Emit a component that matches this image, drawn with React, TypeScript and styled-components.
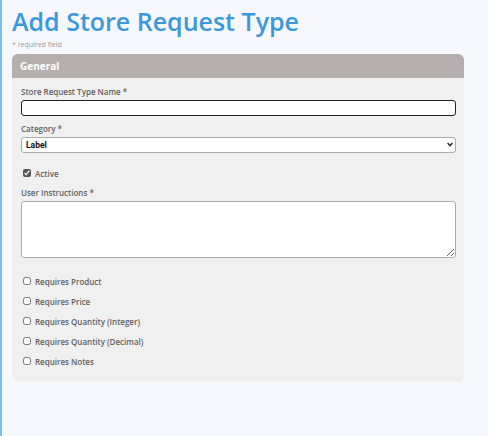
import styled, { createGlobalStyle } from 'styled-components';

const GlobalStyle = createGlobalStyle`
	html, body {
		margin: 0;
		padding: 0;
		background: #f7f8fd;
	}
	body {
		font-family: 'Open Sans', 'DejaVu Sans', sans-serif;
	}
`;

const Page = styled.div`
	min-height: 436px;
	box-sizing: border-box;
	border-left: 2px solid #7cbcee;
	padding: 6px 0 0 10px;
	width: 488px;
`;

const Title = styled.h1`
	margin: 0;
	font-size: 25px;
	font-weight: 600;
	color: #3a98de;
	line-height: 30px;
`;

const Required = styled.div`
	font-size: 7px;
	color: #9a9a9a;
	margin: 4px 0 5px;
`;

const Card = styled.section`
	width: 452px;
	background: #f0f0f0;
	border-radius: 6px;
	overflow: hidden;
	padding-bottom: 15px;
`;

const CardHeader = styled.div`
	background: #b6afaf;
	color: #fff;
	font-weight: 700;
	font-size: 10px;
	height: 24px;
	line-height: 24px;
	padding-left: 8px;
`;

const CardBody = styled.div`
	padding: 9px 8px 0 9px;
	display: flex;
	flex-direction: column;
`;

const Label = styled.label`
	display: block;
	font-size: 8px;
	line-height: 10px;
	font-weight: 600;
	color: #606060;
	margin-bottom: 3px;
`;

const Field = styled.div<{ $gap?: number }>`
	margin-top: ${(p) => p.$gap ?? 0}px;
`;

const TextInput = styled.input<{ $focused?: boolean }>`
	box-sizing: border-box;
	display: block;
	width: 435px;
	height: 16px;
	border: ${(p) => (p.$focused ? '1.5px solid #222' : '1px solid #aaa')};
	border-radius: 3px;
	background: #fff;
	outline: none;
`;

const SelectWrap = styled.div`
	position: relative;
	width: 435px;
`;

const Select = styled.select`
	box-sizing: border-box;
	display: block;
	width: 435px;
	height: 16px;
	border: 1px solid #aaa;
	border-radius: 3px;
	background: #fff;
	font-family: Roboto, 'Liberation Sans', sans-serif;
	font-size: 8.5px;
	font-weight: 700;
	color: #111;
	padding: 0 4px;
	appearance: none;
`;

const Chevron = styled.svg`
	position: absolute;
	right: 3px;
	top: 5px;
	width: 6px;
	height: 5px;
	pointer-events: none;
`;

const TextArea = styled.textarea`
	box-sizing: border-box;
	display: block;
	width: 435px;
	height: 57px;
	border: 1px solid #aaa;
	border-radius: 3px;
	background: #fff;
	resize: vertical;
`;

const CheckRow = styled.label<{ $gap?: number }>`
	display: flex;
	align-items: center;
	gap: 4px;
	height: 12px;
	margin-top: ${(p) => p.$gap ?? 0}px;
	font-size: 8px;
	font-weight: 600;
	color: #606060;
	padding-left: 2px;
`;

const Box = styled.input`
	margin: 0;
	width: 8px;
	height: 8px;
	accent-color: #555;
`;

const requirements = [
	'Requires Product',
	'Requires Price',
	'Requires Quantity (Integer)',
	'Requires Quantity (Decimal)',
	'Requires Notes',
];

export default function App() {
	return (
		<>
			<GlobalStyle />
			<Page>
				<Title>Add Store Request Type</Title>
				<Required>* required field</Required>
				<Card>
					<CardHeader>General</CardHeader>
					<CardBody>
						<Field>
							<Label>Store Request Type Name *</Label>
							<TextInput $focused />
						</Field>
						<Field $gap={8}>
							<Label>Category *</Label>
							<SelectWrap>
								<Select defaultValue='Label'>
									<option>Label</option>
								</Select>
								<Chevron viewBox='0 0 6 5'>
									<path d='M0.6 1 L3 3.6 L5.4 1' fill='none' stroke='#222' strokeWidth='1.4' />
								</Chevron>
							</SelectWrap>
						</Field>
						<CheckRow $gap={14}>
							<Box type='checkbox' defaultChecked />
							Active
						</CheckRow>
						<Field $gap={9}>
							<Label>User Instructions *</Label>
							<TextArea />
						</Field>
						{requirements.map((r, i) => (
							<CheckRow key={r} $gap={i === 0 ? 17 : 8}>
								<Box type='checkbox' />
								{r}
							</CheckRow>
						))}
					</CardBody>
				</Card>
			</Page>
		</>
	);
}
